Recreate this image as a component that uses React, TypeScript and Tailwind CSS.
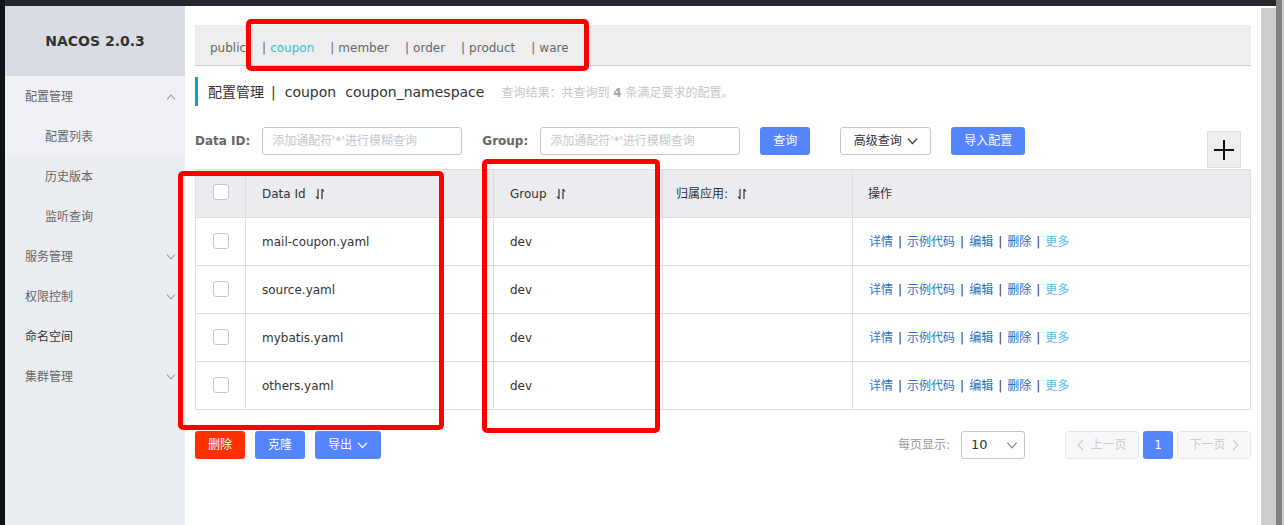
import React from "react";

const font = { fontFamily: '"DejaVu Sans", "Noto Sans CJK SC", sans-serif' };

function Sort() {
  return (
    <svg width="10" height="12" viewBox="0 0 10 12" fill="none" stroke="#333" strokeWidth="1.2" className="ml-[9px]">
      <path d="M3 1v10M3 11L1 8.5" />
      <path d="M7 11V1M7 1l2 2.5" />
    </svg>
  );
}

function Chevron({ up = false, color = "#999", w = 10, h = 6, className = "" }: { up?: boolean; color?: string; w?: number; h?: number; className?: string }) {
  return (
    <svg width={w} height={h} viewBox="0 0 10 6" fill="none" stroke={color} strokeWidth="1.1" className={className}>
      <path d={up ? "M1 5.5l4-4.5 4 4.5" : "M1 0.5l4 4.5 4-4.5"} />
    </svg>
  );
}

function MenuItem({ label, chevron, dark = false }: { label: string; chevron?: "up" | "down"; dark?: boolean }) {
  return (
    <div className={`h-[40px] flex items-center pl-[20px] pr-[9px] pt-[2px] text-[12px] ${dark ? "text-[#333]" : "text-[#666]"}`}>
      <span className="flex-1">{label}</span>
      {chevron && <Chevron up={chevron === "up"} />}
    </div>
  );
}

function SubItem({ label }: { label: string }) {
  return <div className="h-[40px] flex items-center pl-[40px] pt-[2px] text-[12px] text-[#666]">{label}</div>;
}

const rows = ["mail-coupon.yaml", "source.yaml", "mybatis.yaml", "others.yaml"];
const tabs = ["coupon", "member", "order", "product", "ware"];

function Checkbox() {
  return <div className="w-[16px] h-[16px] bg-white border border-[#c4c6cf] rounded-[3px]" />;
}

export default function App() {
  return (
    <div className="relative flex h-[525px] w-[1284px] overflow-hidden bg-white" style={font}>
      <div className="w-[5px] bg-[#0f1217]" />
      <div className="flex-1 flex flex-col">
        <div className="h-[6px] bg-[#24282e]" />
        <div className="flex flex-1">
          <aside className="w-[180px] bg-[#eaedf1] flex flex-col">
            <div className="h-[70px] bg-[#d9dde3] flex items-center justify-center text-[14px] font-bold text-[#333]">
              NACOS 2.0.3
            </div>
            <div className="bg-[#eff1f6]">
              <MenuItem label="配置管理" chevron="up" />
              <SubItem label="配置列表" />
            </div>
            <SubItem label="历史版本" />
            <SubItem label="监听查询" />
            <MenuItem label="服务管理" chevron="down" />
            <MenuItem label="权限控制" chevron="down" />
            <MenuItem label="命名空间" dark />
            <MenuItem label="集群管理" chevron="down" />
          </aside>

          <main className="flex-1 px-[10px] pt-[19px]">
            <div className="h-[41px] bg-[#eeeeee] border-b border-[#cccccc] flex items-center pl-[15px] pt-[5px] text-[12px] text-[#666]">
              <span className="mr-[16px]">public</span>
              {tabs.map((t) => (
                <span key={t} className="mr-[16px]">
                  <span className="mr-[4px]">|</span>
                  <span className={t === "coupon" ? "text-[#36bfd8]" : ""}>{t}</span>
                </span>
              ))}
            </div>

            <div className="mt-[11px] h-[29px] border-l-[3px] border-[#1b9ad6] pl-[10px] pt-[2px] flex items-center">
              <span className="text-[14px] text-[#333]">配置管理</span>
              <span className="text-[14px] text-[#333] ml-[7px] mr-[9px]">|</span>
              <span className="text-[14px] text-[#333]">coupon</span>
              <span className="text-[14px] text-[#333] ml-[9px]">coupon_namespace</span>
              <span className="ml-[17px] text-[12px] text-[#c5c5c5]">
                查询结果：共查询到 <b className="text-[#a5a5a5]">4</b> 条满足要求的配置。
              </span>
            </div>

            <div className="mt-[21px] h-[41px] flex items-start">
              <span className="h-[28px] flex items-center text-[12px] font-bold text-[#666] mr-[12px]">Data ID:</span>
              <input
                className="w-[200px] h-[28px] border border-[#c4c6cf] rounded-[3px] px-[9px] text-[12px] outline-none placeholder:text-[#c4c6cf]"
                placeholder="添加通配符'*'进行模糊查询"
              />
              <span className="ml-[20px] h-[28px] flex items-center text-[12px] font-bold text-[#666] mr-[12px]">Group:</span>
              <input
                className="w-[200px] h-[28px] border border-[#c4c6cf] rounded-[3px] px-[9px] text-[12px] outline-none placeholder:text-[#c4c6cf]"
                placeholder="添加通配符'*'进行模糊查询"
              />
              <button className="ml-[20px] w-[50px] h-[28px] bg-[#5584ff] rounded-[3px] text-white text-[12px]">查询</button>
              <button className="ml-[30px] w-[91px] h-[28px] bg-white border border-[#c4c6cf] rounded-[3px] text-[#333] text-[12px] flex items-center justify-center gap-[5px]">
                高级查询
                <Chevron color="#333" w={11} h={7} />
              </button>
              <button className="ml-[20px] w-[74px] h-[28px] bg-[#5584ff] rounded-[3px] text-white text-[12px]">导入配置</button>
              <button className="ml-auto mr-[10px] mt-[4px] w-[34px] h-[37px] bg-[#eeeeee] border border-[#dddddd] flex items-center justify-center">
                <svg width="22" height="22" viewBox="0 0 22 22" stroke="#111" strokeWidth="2">
                  <path d="M11 1v20M1 11h20" />
                </svg>
              </button>
            </div>

            <div className="mt-[1px] border-l border-t border-[#dcdee3] grid grid-cols-[50px_248px_169px_190px_1fr] text-[12px] text-[#333]">
              <div className="h-[48px] bg-[#ebecf0] border-r border-b border-[#dcdee3] flex items-center justify-center pb-[3px]">
                <Checkbox />
              </div>
              <div className="h-[48px] bg-[#ebecf0] border-r border-b border-[#dcdee3] flex items-center pl-[16px] pt-[1px]">
                Data Id <Sort />
              </div>
              <div className="h-[48px] bg-[#ebecf0] border-r border-b border-[#dcdee3] flex items-center pl-[16px] pt-[1px]">
                Group <Sort />
              </div>
              <div className="h-[48px] bg-[#ebecf0] border-r border-b border-[#dcdee3] flex items-center pl-[13px] pt-[1px]">
                归属应用: <Sort />
              </div>
              <div className="h-[48px] bg-[#ebecf0] border-r border-b border-[#dcdee3] flex items-center pl-[15px] pt-[1px]">
                操作
              </div>
              {rows.map((r) => (
                <React.Fragment key={r}>
                  <div className="h-[48px] border-r border-b border-[#dcdee3] flex items-center justify-center pb-[1px]">
                    <Checkbox />
                  </div>
                  <div className="h-[48px] border-r border-b border-[#dcdee3] flex items-center pl-[16px] pt-[1px]">{r}</div>
                  <div className="h-[48px] border-r border-b border-[#dcdee3] flex items-center pl-[16px] pt-[1px]">dev</div>
                  <div className="h-[48px] border-r border-b border-[#dcdee3]" />
                  <div className="h-[48px] border-r border-b border-[#dcdee3] flex items-center pl-[16px] pt-[1px] text-[#1f6fd1]">
                    <span>详情</span>
                    <span className="text-[#333] mx-[5px]">|</span>
                    <span>示例代码</span>
                    <span className="text-[#333] mx-[5px]">|</span>
                    <span>编辑</span>
                    <span className="text-[#333] mx-[5px]">|</span>
                    <span>删除</span>
                    <span className="text-[#333] mx-[5px]">|</span>
                    <span className="text-[#4cbdf0]">更多</span>
                  </div>
                </React.Fragment>
              ))}
            </div>

            <div className="mt-[21px] h-[28px] flex items-center text-[12px]">
              <button className="w-[50px] h-[28px] bg-[#ff3000] rounded-[3px] text-white">删除</button>
              <button className="ml-[10px] w-[50px] h-[28px] bg-[#5584ff] rounded-[3px] text-white">克隆</button>
              <button className="ml-[10px] w-[66px] h-[28px] bg-[#5584ff] rounded-[3px] text-white flex items-center justify-center gap-[5px]">
                导出
                <Chevron color="#fff" w={11} h={7} />
              </button>
              <span className="ml-auto text-[#999]">每页显示:</span>
              <div className="ml-[11px] w-[64px] h-[28px] border border-[#c4c6cf] rounded-[3px] flex items-center justify-between pl-[9px] pr-[6px]">
                <span className="text-[13px] text-[#333]">10</span>
                <Chevron color="#888" w={12} h={7} />
              </div>
              <button className="ml-[40px] w-[74px] h-[28px] bg-[#f7f8fa] border border-[#e6e7eb] rounded-[3px] text-[#cccccc] flex items-center justify-center gap-[6px]">
                <svg width="7" height="12" viewBox="0 0 7 12" fill="none" stroke="#cccccc" strokeWidth="1.2">
                  <path d="M6 1L1 6l5 5" />
                </svg>
                上一页
              </button>
              <button className="ml-[4px] w-[30px] h-[28px] bg-[#5584ff] rounded-[3px] text-white">1</button>
              <button className="ml-[4px] w-[74px] h-[28px] bg-[#f7f8fa] border border-[#e6e7eb] rounded-[3px] text-[#cccccc] flex items-center justify-center gap-[6px]">
                下一页
                <svg width="7" height="12" viewBox="0 0 7 12" fill="none" stroke="#cccccc" strokeWidth="1.2">
                  <path d="M1 1l5 5-5 5" />
                </svg>
              </button>
            </div>
          </main>
        </div>
      </div>
      <div className="w-[23px] flex">
        <div className="w-[15px] flex flex-col">
          <div className="h-[6px] bg-[#24282e]" />
          <div className="h-[2px] bg-white" />
          <div className="flex-1 bg-[#cccccc]" />
        </div>
        <div className="w-[6px] bg-[#808080]" />
        <div className="w-[2px] bg-[#cccccc]" />
      </div>

      {/* annotation boxes */}
      <div className="absolute left-[246px] top-[19px] w-[343px] h-[52px] border-[5px] border-[#ff0000] rounded-[5px]" />
      <div className="absolute left-[178px] top-[171px] w-[266px] h-[259px] border-[5px] border-[#ff0000] rounded-[5px]" />
      <div className="absolute left-[482px] top-[159px] w-[178px] h-[274px] border-[5px] border-[#ff0000] rounded-[5px]" />
    </div>
  );
}
